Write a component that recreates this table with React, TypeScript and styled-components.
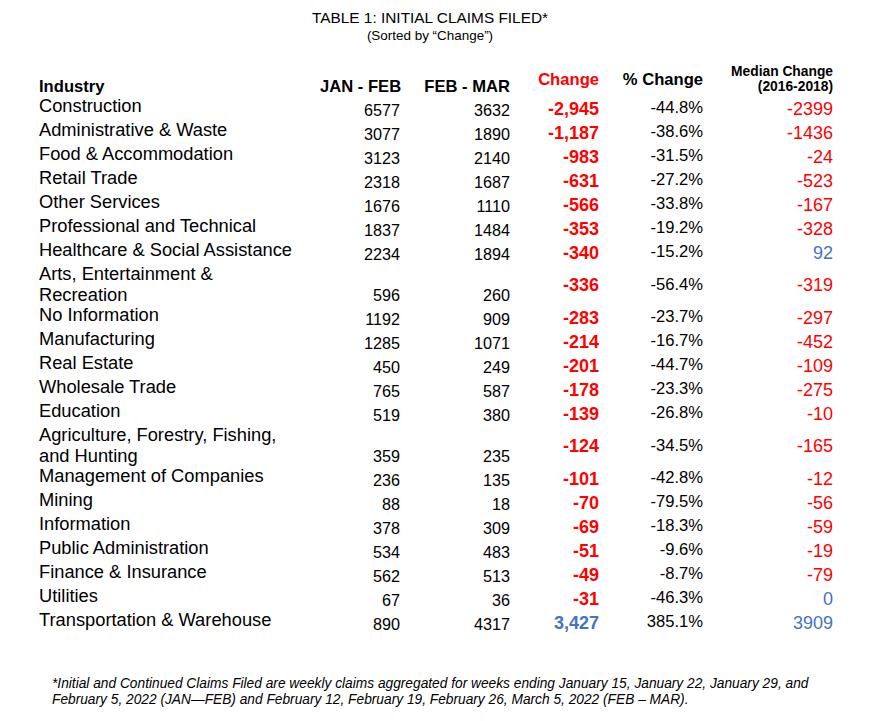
import React from "react";
import styled, { createGlobalStyle } from "styled-components";

const Global = createGlobalStyle`
  html, body { margin: 0; padding: 0; background: #ffffff; }
  body { font-family: "Liberation Sans", Arial, sans-serif; color: #000; }
`;

const RED = "#ff0000";
const BLUE = "#4472c4";

type Tone = "red" | "blue";

interface Row {
  name: string[];
  janFeb: number;
  febMar: number;
  change: string;
  pct: string;
  median: string;
  changeTone: Tone;
  medianTone: Tone;
}

const raw: [string[], number, number, string, string, string][] = [
  [["Construction"], 6577, 3632, "-2,945", "-44.8%", "-2399"],
  [["Administrative & Waste"], 3077, 1890, "-1,187", "-38.6%", "-1436"],
  [["Food & Accommodation"], 3123, 2140, "-983", "-31.5%", "-24"],
  [["Retail Trade"], 2318, 1687, "-631", "-27.2%", "-523"],
  [["Other Services"], 1676, 1110, "-566", "-33.8%", "-167"],
  [["Professional and Technical"], 1837, 1484, "-353", "-19.2%", "-328"],
  [["Healthcare & Social Assistance"], 2234, 1894, "-340", "-15.2%", "92"],
  [["Arts, Entertainment &", "Recreation"], 596, 260, "-336", "-56.4%", "-319"],
  [["No Information"], 1192, 909, "-283", "-23.7%", "-297"],
  [["Manufacturing"], 1285, 1071, "-214", "-16.7%", "-452"],
  [["Real Estate"], 450, 249, "-201", "-44.7%", "-109"],
  [["Wholesale Trade"], 765, 587, "-178", "-23.3%", "-275"],
  [["Education"], 519, 380, "-139", "-26.8%", "-10"],
  [["Agriculture, Forestry, Fishing,", "and Hunting"], 359, 235, "-124", "-34.5%", "-165"],
  [["Management of Companies"], 236, 135, "-101", "-42.8%", "-12"],
  [["Mining"], 88, 18, "-70", "-79.5%", "-56"],
  [["Information"], 378, 309, "-69", "-18.3%", "-59"],
  [["Public Administration"], 534, 483, "-51", "-9.6%", "-19"],
  [["Finance & Insurance"], 562, 513, "-49", "-8.7%", "-79"],
  [["Utilities"], 67, 36, "-31", "-46.3%", "0"],
  [["Transportation & Warehouse"], 890, 4317, "3,427", "385.1%", "3909"],
];

const rows: Row[] = raw.map(([name, janFeb, febMar, change, pct, median]) => ({
  name,
  janFeb,
  febMar,
  change,
  pct,
  median,
  changeTone: change.startsWith("-") ? "red" : "blue",
  medianTone: median.startsWith("-") ? "red" : "blue",
}));

const Page = styled.div`
  width: 860px;
  padding-top: 9px;
  display: flex;
  flex-direction: column;
`;

const Title = styled.div`
  text-align: center;
  font-size: 15.4px;
  line-height: 17px;
`;

const Subtitle = styled.div`
  text-align: center;
  font-size: 13.45px;
  line-height: 15px;
  margin-top: 2px;
`;

const Table = styled.table`
  margin: 19px 0 0 39px;
  border-collapse: collapse;
  border-spacing: 0;
  table-layout: fixed;
  width: 794px;
`;

const HeadCell = styled.th<{ $align?: "left" | "right"; $valign?: "middle" | "bottom"; $red?: boolean; $small?: boolean }>`
  padding: 0;
  height: 34px;
  font-weight: bold;
  font-size: ${(p) => (p.$small ? "13.8px" : "16.6px")};
  line-height: ${(p) => (p.$small ? "15px" : "19px")};
  text-align: ${(p) => p.$align ?? "right"};
  vertical-align: ${(p) => p.$valign ?? "bottom"};
  color: ${(p) => (p.$red ? RED : "#000")};
  white-space: nowrap;
`;

const NameCell = styled.td`
  padding: 0;
  height: 24px;
  font-size: 18.3px;
  line-height: 20.5px;
  vertical-align: top;
  white-space: nowrap;
`;

const CountCell = styled.td`
  padding: 0;
  font-size: 16.2px;
  line-height: 20px;
  text-align: right;
  vertical-align: bottom;
`;

const ChangeCell = styled.td<{ $tone: Tone }>`
  padding: 1px 0 0;
  font-size: 18px;
  font-weight: bold;
  line-height: 20px;
  text-align: right;
  vertical-align: middle;
  color: ${(p) => (p.$tone === "red" ? RED : BLUE)};
`;

const PctCell = styled.td`
  padding: 0;
  font-size: 16.6px;
  line-height: 20px;
  text-align: right;
  vertical-align: middle;
`;

const MedianCell = styled.td<{ $tone: Tone }>`
  padding: 1px 0 0;
  font-size: 18px;
  line-height: 20px;
  text-align: right;
  vertical-align: middle;
  color: ${(p) => (p.$tone === "red" ? RED : BLUE)};
`;

const Footnote = styled.p`
  margin: 41px 0 0 52px;
  font-family: "Liberation Sans Narrow", "Arial Narrow", "Liberation Sans", sans-serif;
  font-style: italic;
  font-size: 14.5px;
  line-height: 16px;
  white-space: nowrap;
  transform: scaleX(0.947);
  transform-origin: left top;
`;

export default function App() {
  return (
    <>
      <Global />
      <Page>
        <Title>TABLE 1: INITIAL CLAIMS FILED*</Title>
        <Subtitle>(Sorted by “Change”)</Subtitle>
        <Table>
          <colgroup>
            <col style={{ width: 281 }} />
            <col style={{ width: 80 }} />
            <col style={{ width: 110 }} />
            <col style={{ width: 89 }} />
            <col style={{ width: 104 }} />
            <col style={{ width: 130 }} />
          </colgroup>
          <thead>
            <tr>
              <HeadCell $align="left">Industry</HeadCell>
              <HeadCell>JAN - FEB</HeadCell>
              <HeadCell>FEB - MAR</HeadCell>
              <HeadCell $valign="middle" $red>
                Change
              </HeadCell>
              <HeadCell $valign="middle">% Change</HeadCell>
              <HeadCell $valign="middle" $small>
                Median Change
                <br />
                (2016-2018)
              </HeadCell>
            </tr>
          </thead>
          <tbody>
            {rows.map((r) => (
              <tr key={r.name.join(" ")}>
                <NameCell>
                  {r.name.map((line, i) => (
                    <React.Fragment key={line}>
                      {i > 0 && <br />}
                      {line}
                    </React.Fragment>
                  ))}
                </NameCell>
                <CountCell>{r.janFeb}</CountCell>
                <CountCell>{r.febMar}</CountCell>
                <ChangeCell $tone={r.changeTone}>{r.change}</ChangeCell>
                <PctCell>{r.pct}</PctCell>
                <MedianCell $tone={r.medianTone}>{r.median}</MedianCell>
              </tr>
            ))}
          </tbody>
        </Table>
        <Footnote>
          *Initial and Continued Claims Filed are weekly claims aggregated for weeks ending January 15, January 22, January 29, and
          <br />
          February 5, 2022 (JAN—FEB) and February 12, February 19, February 26, March 5, 2022 (FEB – MAR).
        </Footnote>
      </Page>
    </>
  );
}
